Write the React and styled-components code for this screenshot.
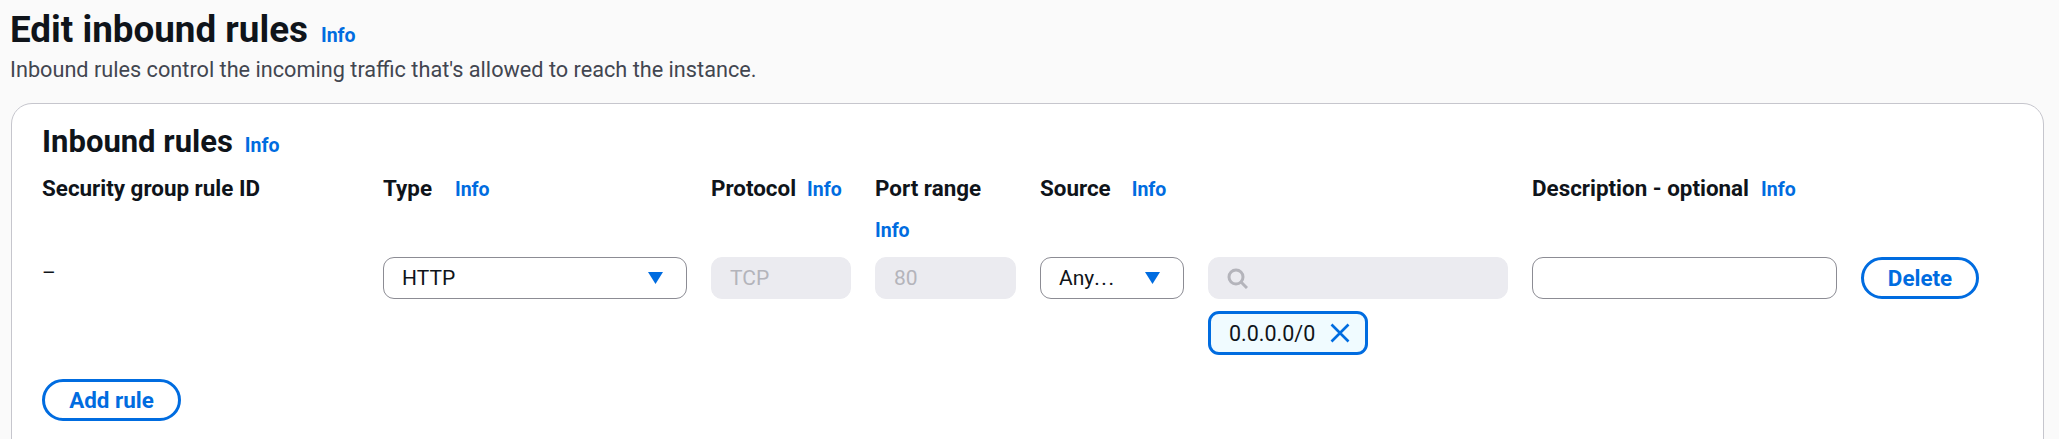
import React from 'react';
import styled, { createGlobalStyle } from 'styled-components';

const GlobalStyle = createGlobalStyle`
  html, body {
    margin: 0;
    background: #fafafa;
    font-family: Roboto, "Noto Sans", sans-serif;
    color: #0f141a;
  }
`;

const Page = styled.div`
  width: 2059px;
  height: 439px;
  overflow: hidden;
  box-sizing: border-box;
  padding: 0 15px 0 11px;
`;

const PageHeader = styled.header`
  height: 103px;
  box-sizing: border-box;
  padding-top: 10px;
  margin-left: -1px;
`;

const TitleRow = styled.div`
  display: flex;
  align-items: baseline;
  gap: ${(p) => p.$gap || 13}px;
`;

const Title = styled.h1`
  margin: 0;
  font-size: 36.8px;
  line-height: 40px;
  font-weight: 700;
`;

const Subtitle = styled.p`
  margin: 8px 0 0;
  font-size: 21.7px;
  line-height: 24px;
  color: #424650;
`;

const InfoLink = styled.a`
  color: #006ce0;
  font-size: 19.5px;
  line-height: 24px;
  font-weight: 700;
`;

const Card = styled.section`
  height: 360px;
  box-sizing: border-box;
  background: #fff;
  border: 1px solid #c6c6cd;
  border-radius: 21px;
  padding: 22px 30px;
`;

const CardTitle = styled.h2`
  margin: 0;
  font-size: 31px;
  line-height: 32px;
  font-weight: 700;
`;

const RuleGrid = styled.div`
  display: grid;
  grid-template-columns: 317px 304px 140px 141px 144px 300px 305px 118px;
  column-gap: 24px;
  margin-top: 18px;
`;

const HeaderCell = styled.div`
  display: flex;
  flex-wrap: wrap;
  align-items: baseline;
  align-content: flex-start;
  column-gap: ${(p) => p.$gap || 12}px;
  row-gap: 19px;
  height: 81px;
  font-size: 22.4px;
  line-height: 24px;
  font-weight: 700;
`;

const Dash = styled.div`
  font-size: 21px;
  line-height: 24px;
  padding-top: 4px;
`;

const Field = styled.div`
  box-sizing: border-box;
  height: 42px;
  display: flex;
  align-items: center;
  gap: 12px;
  padding: 0 ${(p) => p.$right || 18}px 0 18px;
  border-radius: 11px;
  font-size: 21px;
  background: ${(p) => (p.$disabled ? '#ebebf0' : '#fff')};
  border: 1px solid ${(p) => (p.$disabled ? '#ebebf0' : '#8c8c94')};
  color: ${(p) => (p.$disabled ? '#b4b4bb' : '#0f141a')};
`;

const FieldText = styled.span`
  flex: 1;
`;

const Ellipsis = styled.span`
  letter-spacing: 1.6px;
`;

const Caret = styled.svg`
  width: 15px;
  height: 12px;
  fill: #006ce0;
  flex: none;
`;

const SearchIcon = styled.svg`
  width: 21px;
  height: 21px;
  fill: none;
  stroke: #b4b4bb;
  stroke-width: 3;
  flex: none;
`;

const SourceStack = styled.div`
  display: flex;
  flex-direction: column;
  align-items: flex-start;
  gap: 12px;
`;

const SearchField = styled(Field)`
  width: 100%;
`;

const Token = styled.div`
  box-sizing: border-box;
  width: 160px;
  height: 44px;
  display: flex;
  align-items: center;
  justify-content: space-between;
  padding: 0 15px 0 18px;
  background: #f0fbff;
  border: 3px solid #006ce0;
  border-radius: 11px;
  font-size: 21.5px;
`;

const CloseIcon = styled.svg`
  width: 20px;
  height: 20px;
  fill: none;
  stroke: #006ce0;
  stroke-width: 2.6;
  flex: none;
`;

const PillButton = styled.button`
  box-sizing: border-box;
  height: 42px;
  width: ${(p) => p.$width}px;
  padding: 0;
  background: #fff;
  border: 3px solid #006ce0;
  border-radius: 21px;
  color: #006ce0;
  font-family: inherit;
  font-size: 22.4px;
  font-weight: 700;
`;

const Footer = styled.div`
  margin-top: 24px;
`;

const DownCaret = () => (
  <Caret viewBox="0 0 15 12">
    <path d="M0 0h15L7.5 12z" />
  </Caret>
);

const App = () => (
  <Page>
    <GlobalStyle />
    <PageHeader>
      <TitleRow>
        <Title>Edit inbound rules</Title>
        <InfoLink>Info</InfoLink>
      </TitleRow>
      <Subtitle>Inbound rules control the incoming traffic that's allowed to reach the instance.</Subtitle>
    </PageHeader>
    <Card>
      <TitleRow $gap={12}>
        <CardTitle>Inbound rules</CardTitle>
        <InfoLink>Info</InfoLink>
      </TitleRow>
      <RuleGrid>
        <HeaderCell>Security group rule ID</HeaderCell>
        <HeaderCell $gap={23}>Type <InfoLink>Info</InfoLink></HeaderCell>
        <HeaderCell $gap={11}>Protocol <InfoLink>Info</InfoLink></HeaderCell>
        <HeaderCell>Port range <InfoLink>Info</InfoLink></HeaderCell>
        <HeaderCell $gap={21}>Source <InfoLink>Info</InfoLink></HeaderCell>
        <HeaderCell />
        <HeaderCell>Description - optional <InfoLink>Info</InfoLink></HeaderCell>
        <HeaderCell />

        <Dash>–</Dash>
        <Field $right={23}>
          <FieldText>HTTP</FieldText>
          <DownCaret />
        </Field>
        <Field $disabled>TCP</Field>
        <Field $disabled>80</Field>
        <Field $right={23}>
          <FieldText>Any<Ellipsis>...</Ellipsis></FieldText>
          <DownCaret />
        </Field>
        <SourceStack>
          <SearchField $disabled>
            <SearchIcon viewBox="0 0 21 21">
              <circle cx="9" cy="9" r="7" />
              <path d="M14 14l6 6" />
            </SearchIcon>
          </SearchField>
          <Token>
            0.0.0.0/0
            <CloseIcon viewBox="0 0 20 20">
              <path d="M1.5 1.5l17 17M18.5 1.5l-17 17" />
            </CloseIcon>
          </Token>
        </SourceStack>
        <Field />
        <PillButton $width={118}>Delete</PillButton>
      </RuleGrid>
      <Footer>
        <PillButton $width={139}>Add rule</PillButton>
      </Footer>
    </Card>
  </Page>
);

export default App;
